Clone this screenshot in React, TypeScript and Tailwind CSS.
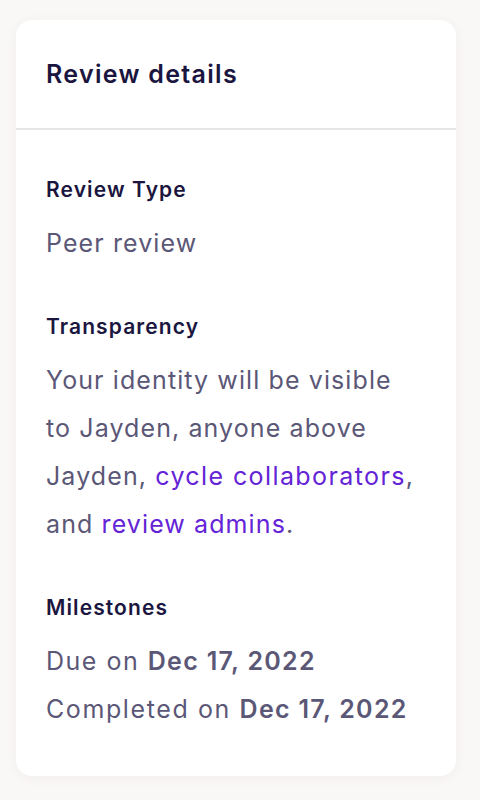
import React from "react";

export default function App() {
  const font = { fontFamily: "Inter, 'Noto Sans', sans-serif" };
  return (
    <div className="min-h-[800px] w-[480px] bg-[#faf8f7] pt-[20px] px-[16px]" style={font}>
      <div className="w-[440px] rounded-[16px] bg-white shadow-[0_2px_12px_rgba(60,40,20,0.05)]">
        <div className="h-[110px] border-b-2 border-[#e6e6e6] pl-[30px] flex items-center pt-[2px]">
          <h2 className="text-[25px] font-semibold text-[#1b1640] tracking-[1.3px]">Review details</h2>
        </div>
        <div className="pl-[30px] pr-[20px] pt-[44px] pb-[43px] flex flex-col gap-[44px]">
          <section>
            <h3 className="text-[21px] leading-[32px] font-semibold text-[#1b1640] tracking-[1.1px]">Review Type</h3>
            <p className="mt-[13px] text-[25px] leading-[48px] text-[#5b5777] tracking-[1.1px]">Peer review</p>
          </section>
          <section>
            <h3 className="text-[21px] leading-[32px] font-semibold text-[#1b1640] tracking-[1.1px]">Transparency</h3>
            <p className="mt-[13px] text-[25px] leading-[48px] text-[#5b5777] tracking-[1.1px] whitespace-nowrap">
              Your identity will be visible
              <br />
              to Jayden, anyone above
              <br />
              Jayden, <span className="text-[#6423d6] tracking-[1.4px]">cycle collaborators</span>,
              <br />
              and <span className="text-[#6423d6]">review admins</span>.
            </p>
          </section>
          <section>
            <h3 className="text-[21px] leading-[32px] font-semibold text-[#1b1640] tracking-[1.1px]">Milestones</h3>
            <p className="mt-[13px] text-[25px] leading-[48px] text-[#5b5777] tracking-[1.5px]">
              Due on <span className="font-semibold tracking-[1.3px]">Dec 17, 2022</span>
            </p>
            <p className="text-[25px] leading-[48px] text-[#5b5777] tracking-[1.6px]">
              Completed on <span className="font-semibold tracking-[1.3px]">Dec 17, 2022</span>
            </p>
          </section>
        </div>
      </div>
    </div>
  );
}
